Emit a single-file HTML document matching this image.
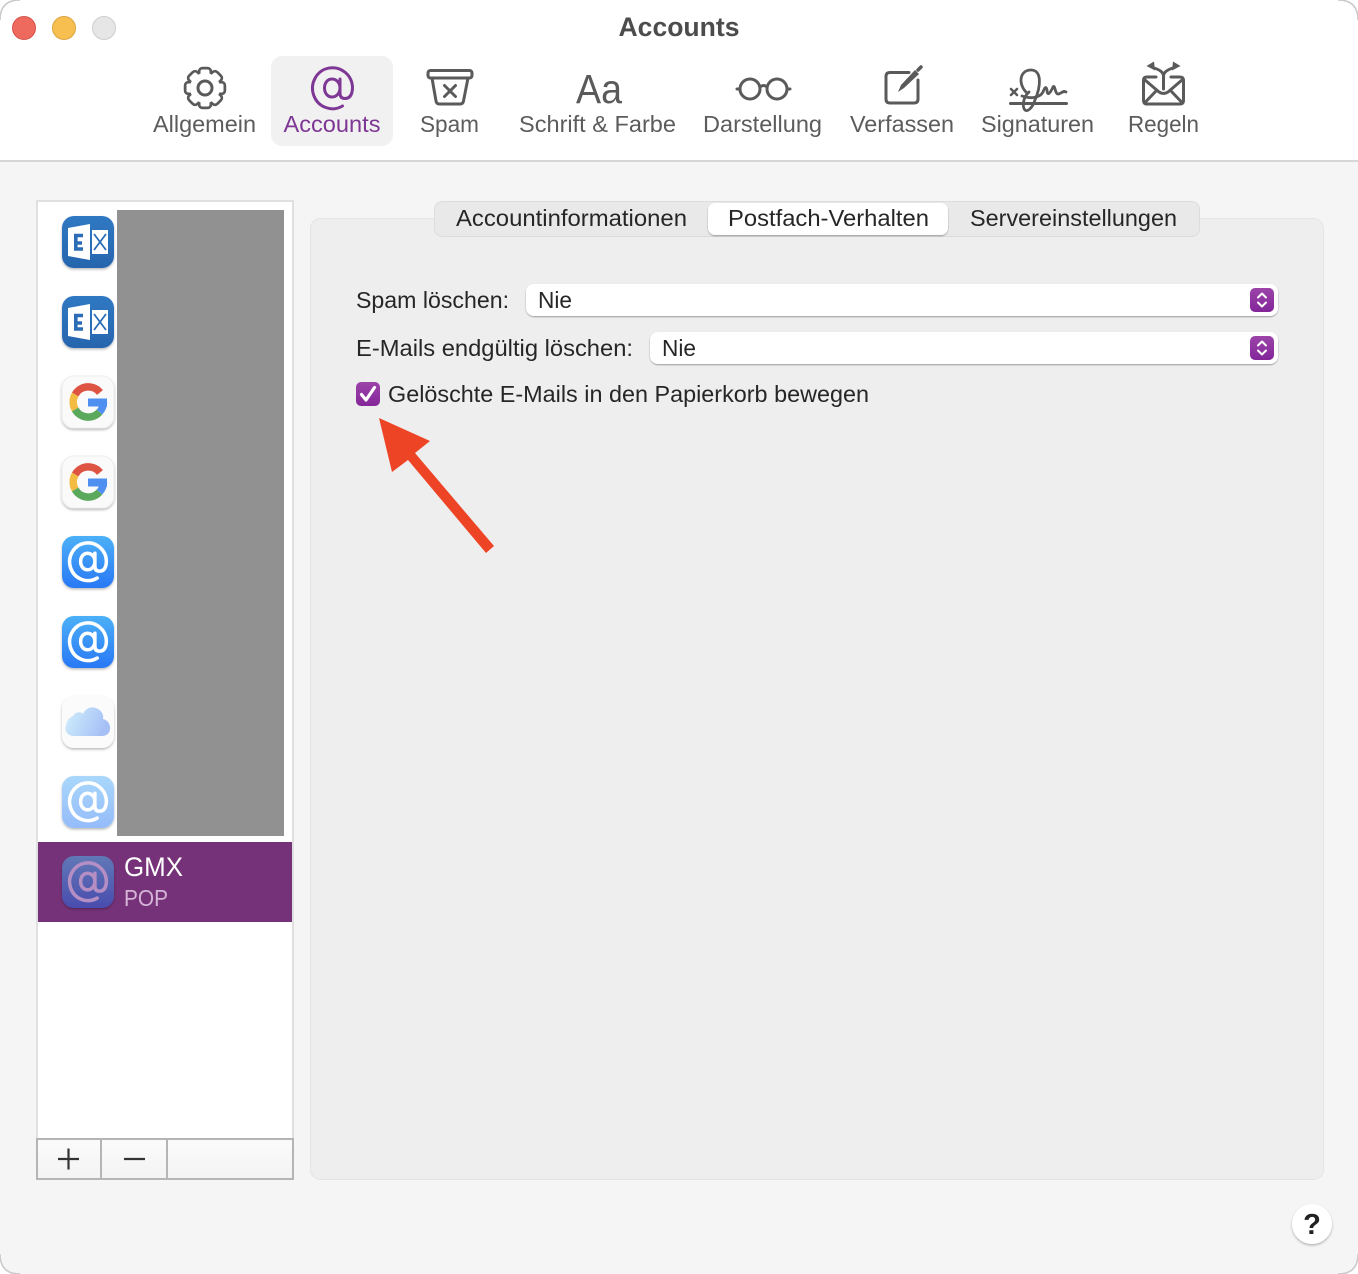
<!DOCTYPE html>
<html lang="de"><head><meta charset="utf-8"><title>Accounts</title>
<style>
html,body{margin:0;padding:0;background:#fff;width:1358px;height:1274px;overflow:hidden}
svg{display:block}
text{font-family:"Liberation Sans",sans-serif}
.tb{font-size:23px;fill:#5c5c5c}
.tx{font-size:23px;fill:#262626}
.ic{fill:none;stroke:#5a5a5a;stroke-width:3;stroke-linecap:round;stroke-linejoin:round}
</style></head><body>
<svg xmlns="http://www.w3.org/2000/svg" width="1358" height="1274" viewBox="0 0 1358 1274">
<defs>
<linearGradient id="gEx" x1="0" y1="0" x2="0" y2="1"><stop offset="0" stop-color="#2f78c2"/><stop offset="1" stop-color="#2765ae"/></linearGradient>
<linearGradient id="gBl" x1="0" y1="0" x2="0" y2="1"><stop offset="0" stop-color="#4cb0f8"/><stop offset="1" stop-color="#2878f4"/></linearGradient>
<linearGradient id="gLt" x1="0" y1="0" x2="0" y2="1"><stop offset="0" stop-color="#a9d7fb"/><stop offset="1" stop-color="#94bcfa"/></linearGradient>
<linearGradient id="gSel" x1="0" y1="0" x2="0" y2="1"><stop offset="0" stop-color="#6078b6"/><stop offset="1" stop-color="#4a4cae"/></linearGradient>
<linearGradient id="gCl" x1="0" y1="0" x2="1" y2="0.3"><stop offset="0" stop-color="#d2f0fc"/><stop offset="1" stop-color="#a6c0f6"/></linearGradient>
<linearGradient id="gPu" x1="0" y1="0" x2="0" y2="1"><stop offset="0" stop-color="#9c44a9"/><stop offset="1" stop-color="#84269a"/></linearGradient>
<linearGradient id="gBt" x1="0" y1="0" x2="0" y2="1"><stop offset="0" stop-color="#fbfbfb"/><stop offset="1" stop-color="#f3f3f3"/></linearGradient>
<filter id="sh" x="-20%" y="-20%" width="140%" height="150%"><feDropShadow dx="0" dy="1.5" stdDeviation="1.2" flood-color="#000" flood-opacity=".28"/></filter>
<filter id="sh2" x="-5%" y="-20%" width="110%" height="150%"><feDropShadow dx="0" dy="1" stdDeviation=".8" flood-color="#000" flood-opacity=".35"/></filter>
<path id="at" d="M7.500,-9V5q0,5.500 5,5.500q7,0 7.500,-10.500a20,20.500 0 1 0 -10,18M7.500,0c0,5 -3.500,9 -8,9s-7.500,-4 -7.500,-9s3,-9 7.500,-9s8,4 8,9" fill="none" stroke-linecap="round"/>
<rect id="tooth" x="-4.5" y="-18.5" width="9" height="8" rx="2"/>
<g id="gearShape">
<circle r="15"/>
<use href="#tooth"/><use href="#tooth" transform="rotate(45)"/><use href="#tooth" transform="rotate(90)"/><use href="#tooth" transform="rotate(135)"/><use href="#tooth" transform="rotate(180)"/><use href="#tooth" transform="rotate(225)"/><use href="#tooth" transform="rotate(270)"/><use href="#tooth" transform="rotate(315)"/>
</g>
<g id="exch">
<rect x="62" y="0" width="52" height="52" rx="12" fill="url(#gEx)" filter="url(#sh)"/>
<polygon points="68,12 90,8 90,44 68,40" fill="#fff"/>
<rect x="92" y="14" width="16" height="24" fill="#fff"/>
<path d="M74,19.500h9M75.800,19.500v15M74,27h8M74,33h9" fill="none" stroke="#2b6db6" stroke-width="3.600"/>
<path d="M94,18 106,34M106,18 94,34" stroke="#2b6db6" stroke-width="1.800" fill="none"/>
</g>
<g id="goog">
<rect x="62" y="0" width="52" height="52" rx="12" fill="#fafafa" stroke="#efefef" filter="url(#sh)"/>
<g fill="none" stroke-width="7.500">
<path d="M100,16.500A15,15 0 0 0 75.200,18.500" stroke="#dd5442"/>
<path d="M75.200,18.500A15,15 0 0 0 75.200,33.500" stroke="#f3bb42"/>
<path d="M75.200,33.500A15,15 0 0 0 99.500,36" stroke="#5aa85c"/>
<path d="M99.500,36A15,15 0 0 0 103.500,26" stroke="#4f8ff0"/>
</g>
<rect x="88" y="22.500" width="19" height="8" fill="#4f8ff0"/>
</g>
</defs>

<!-- window -->
<rect width="1358" height="1274" fill="#f5f5f5"/>
<rect width="1358" height="160" fill="#fff"/>
<path d="M0,20V0H20Q0,0 0,20ZM1338,0H1358V20Q1358,0 1338,0Z" fill="#fff"/>
<path d="M0,1254V1274H20Q0,1274 0,1254ZM1338,1274H1358V1254Q1358,1274 1338,1274Z" fill="#fff"/>
<path d="M0,20Q0,0 20,0M1338,0Q1358,0 1358,20M0,1254Q0,1274 20,1274M1338,1274Q1358,1274 1358,1254" fill="none" stroke="#c9c9c9" stroke-width="1.500"/>
<rect y="160" width="1358" height="2" fill="#d6d6d6"/>

<!-- traffic lights -->
<circle cx="24" cy="28" r="11.500" fill="#ee6a5f" stroke="#d5534b"/>
<circle cx="64" cy="28" r="11.500" fill="#f6bf50" stroke="#dca53e"/>
<circle cx="104" cy="28" r="11.500" fill="#e6e6e6" stroke="#cdcdcd"/>
<text x="618.500" y="36" font-size="27" font-weight="700" fill="#4c4c4c" textLength="121" lengthAdjust="spacingAndGlyphs">Accounts</text>

<!-- toolbar -->
<rect x="271" y="56" width="122" height="90" rx="11" fill="#f1f1f1"/>
<g transform="translate(205,88)">
<use href="#gearShape" fill="#5a5a5a" stroke="#5a5a5a" stroke-width="5.500" stroke-linejoin="round"/>
<use href="#gearShape" fill="#fff"/>
<circle r="7" fill="none" stroke="#5a5a5a" stroke-width="3"/>
</g>
<use href="#at" transform="translate(332.500,88)" stroke="#7e3794" stroke-width="3"/>
<g class="ic">
<rect x="428" y="70.500" width="44" height="7.500" rx="2.500"/>
<path d="M432,78 436,101q.5,3 3.500,3H460q3,0 3.500,-3L468,78"/>
<path d="M444.500,85.500 455.500,96.500M455.500,85.500 444.500,96.500"/>
</g>
<text x="576" y="103" font-size="41" fill="#5a5a5a" textLength="46" lengthAdjust="spacingAndGlyphs">Aa</text>
<g class="ic">
<circle cx="750" cy="89" r="10"/><circle cx="777" cy="89" r="10"/>
<path d="M760,87q3.500,-3 7,0M737,89h3M787,89h3"/>
<path d="M909,72.500H890q-4,0 -4,4V99q0,4 4,4H914q4,0 4,-4V80"/>
<path d="M1010.500,103.500H1066.500"/>
<path d="M1011,89 1017,95M1017,89 1011,95" stroke-width="2.500"/>
<path d="M1027,93C1018,85 1019,70 1031,70C1042,70 1041,86 1035,100C1032,109 1027,112 1025,110C1022,107 1023,97 1029,92" stroke-width="2.800"/>
<path d="M1022,96C1030,99 1040,98 1043,92C1045,87 1046,86 1047,90C1047,96 1050,94 1053,87C1055,84 1055,94 1058,94C1061,94 1063,90 1066,92" stroke-width="2.800"/>
<path d="M1156,77H1147q-3.500,0 -3.500,3.500V100q0,4 3.500,4H1180q3.500,0 3.500,-4V80.500q0,-3.500 -3.500,-3.500H1171"/>
<path d="M1145,80 1159,92q4.500,3 9,0L1182,80M1145.500,102 1156,91M1181.500,102 1171,91"/>
<path d="M1163.500,89V76M1163.500,76Q1163.500,71 1154,68M1163.500,76Q1163.500,71 1173,68"/>
</g>
<polygon points="898,92 901,85 915,70 919,74 904,88" fill="#5a5a5a"/>
<path d="M918,70 921,67" stroke="#5a5a5a" stroke-width="3.500" stroke-linecap="round"/>
<polygon points="1146.500,66 1154,61.500 1155,70.500" fill="#5a5a5a"/>
<polygon points="1180.500,66 1173,61.500 1172,70.500" fill="#5a5a5a"/>
<text class="tb" x="153" y="132" textLength="103" lengthAdjust="spacingAndGlyphs">Allgemein</text>
<text class="tb" x="283.500" y="132" textLength="97" lengthAdjust="spacingAndGlyphs" style="fill:#7e3794">Accounts</text>
<text class="tb" x="420" y="132" textLength="59" lengthAdjust="spacingAndGlyphs">Spam</text>
<text class="tb" x="519" y="132" textLength="157" lengthAdjust="spacingAndGlyphs">Schrift &amp; Farbe</text>
<text class="tb" x="703" y="132" textLength="119" lengthAdjust="spacingAndGlyphs">Darstellung</text>
<text class="tb" x="850" y="132" textLength="104" lengthAdjust="spacingAndGlyphs">Verfassen</text>
<text class="tb" x="981" y="132" textLength="113" lengthAdjust="spacingAndGlyphs">Signaturen</text>
<text class="tb" x="1128" y="132" textLength="71" lengthAdjust="spacingAndGlyphs">Regeln</text>

<!-- list -->
<rect x="37" y="201" width="256" height="938" fill="#fff" stroke="#e0e0e0" stroke-width="2"/>
<use href="#exch" y="216"/>
<use href="#exch" y="296"/>
<use href="#goog" y="376"/>
<use href="#goog" y="456"/>
<rect x="62" y="536" width="52" height="52" rx="12" fill="url(#gBl)" filter="url(#sh)"/>
<use href="#at" transform="translate(88,561.500) scale(.92)" stroke="#fff" stroke-width="3.800"/>
<rect x="62" y="616" width="52" height="52" rx="12" fill="url(#gBl)" filter="url(#sh)"/>
<use href="#at" transform="translate(88,641.500) scale(.92)" stroke="#fff" stroke-width="3.800"/>
<rect x="62" y="696" width="52" height="52" rx="12" fill="#fbfbfb" filter="url(#sh)"/>
<path d="M74,736C67,736 64,730 66,725C67,720 70,717 73,716C75,712 81,711 83,714C86,707 93,706 98,709C102,711 104,716 103,719C108,720 111,725 110,730C109,734 106,736 102,736Z" fill="url(#gCl)"/>
<rect x="62" y="776" width="52" height="52" rx="12" fill="url(#gLt)" filter="url(#sh)"/>
<use href="#at" transform="translate(88,801.500) scale(.92)" stroke="#fff" stroke-width="3.800"/>
<rect x="117" y="210" width="167" height="626" fill="#919191"/>
<rect x="38" y="842" width="254" height="80" fill="#763278"/>
<rect x="62" y="856" width="52" height="52" rx="12" fill="url(#gSel)" filter="url(#sh)"/>
<use href="#at" transform="translate(88,881.500) scale(.92)" stroke="#b58fc4" stroke-width="3.800"/>
<text x="124" y="876" font-size="27" fill="#fff" textLength="59" lengthAdjust="spacingAndGlyphs">GMX</text>
<text x="124" y="906" font-size="23" fill="#d5b4d8" textLength="44" lengthAdjust="spacingAndGlyphs">POP</text>

<!-- +/- bar -->
<rect x="37" y="1139" width="256" height="40" fill="url(#gBt)" stroke="#b5b5b5" stroke-width="2"/>
<path d="M101,1139V1179M167,1139V1179" stroke="#b5b5b5" stroke-width="2"/>
<path d="M58,1159H79M68.500,1148.500V1169.500M124,1159H145" stroke="#333" stroke-width="2.200"/>

<!-- panel -->
<rect x="310.500" y="218.500" width="1013" height="961" rx="10" fill="#eeeeee" stroke="#e4e4e4"/>
<rect x="434.500" y="201.500" width="765" height="35" rx="8" fill="#e9e9e9" stroke="#dcdcdc"/>
<rect x="708" y="203" width="240" height="32" rx="7" fill="#fff" filter="url(#sh2)"/>
<text class="tx" x="456" y="226" textLength="231" lengthAdjust="spacingAndGlyphs">Accountinformationen</text>
<text class="tx" x="728" y="226" textLength="201" lengthAdjust="spacingAndGlyphs">Postfach-Verhalten</text>
<text class="tx" x="970" y="226" textLength="207" lengthAdjust="spacingAndGlyphs">Servereinstellungen</text>

<text class="tx" x="356" y="308" textLength="153" lengthAdjust="spacingAndGlyphs">Spam löschen:</text>
<rect x="526" y="284" width="752" height="32" rx="8" fill="#fff" filter="url(#sh2)"/>
<text class="tx" x="538" y="308" textLength="34" lengthAdjust="spacingAndGlyphs">Nie</text>
<rect x="1250" y="288" width="24" height="24" rx="5" fill="url(#gPu)"/>
<path d="M1258,297.500 1262,293.500 1266,297.500M1258,302.500 1262,306.500 1266,302.500" fill="none" stroke="#fff" stroke-width="2" stroke-linecap="round" stroke-linejoin="round"/>

<text class="tx" x="356" y="356" textLength="277" lengthAdjust="spacingAndGlyphs">E-Mails endgültig löschen:</text>
<rect x="650" y="332" width="628" height="32" rx="8" fill="#fff" filter="url(#sh2)"/>
<text class="tx" x="662" y="356" textLength="34" lengthAdjust="spacingAndGlyphs">Nie</text>
<rect x="1250" y="336" width="24" height="24" rx="5" fill="url(#gPu)"/>
<path d="M1258,345.500 1262,341.500 1266,345.500M1258,350.500 1262,354.500 1266,350.500" fill="none" stroke="#fff" stroke-width="2" stroke-linecap="round" stroke-linejoin="round"/>

<rect x="356" y="382" width="24" height="24" rx="5" fill="url(#gPu)"/>
<path d="M361.500,394.500 366,400 374.500,387.500" fill="none" stroke="#fff" stroke-width="3.200" stroke-linecap="round" stroke-linejoin="round"/>
<text class="tx" x="388" y="402" textLength="481" lengthAdjust="spacingAndGlyphs">Gelöschte E-Mails in den Papierkorb bewegen</text>

<!-- arrow -->
<polygon points="379,418 430,441 415,453 494,546 486,553 408,460 392,472" fill="#ee4426"/>

<!-- help -->
<circle cx="1312" cy="1224" r="20" fill="#fff" filter="url(#sh)"/>
<text x="1312" y="1234" font-size="29" font-weight="700" text-anchor="middle" fill="#222">?</text>
</svg>
</body></html>
